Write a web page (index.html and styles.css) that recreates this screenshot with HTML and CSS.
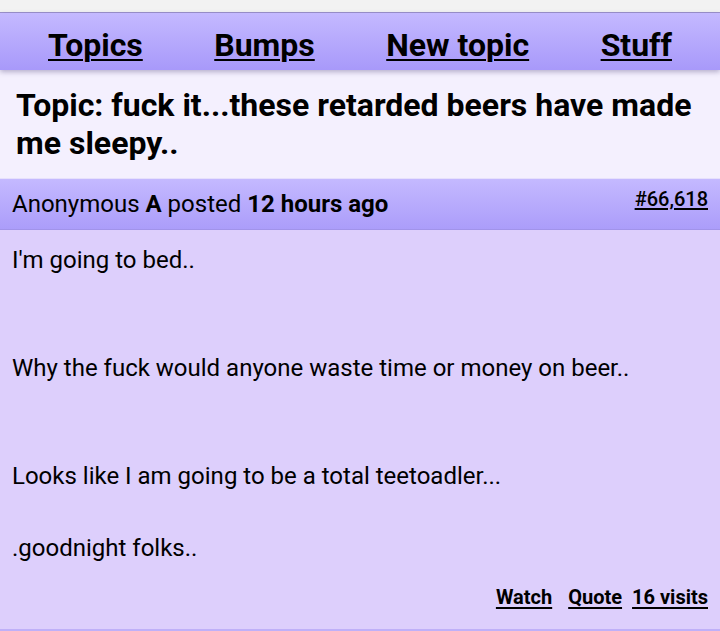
FILE: index.html
```html
<!DOCTYPE html>
<html>
<head>
<meta charset="utf-8">
<link rel="stylesheet" href="styles.css">
</head>
<body>
<div class="topstrip"></div>
<nav class="nav">
  <a href="#">Topics</a>
  <a href="#">Bumps</a>
  <a href="#">New topic</a>
  <a href="#">Stuff</a>
</nav>
<h1 class="title">Topic: fuck it...these retarded beers have made me sleepy..</h1>
<div class="post">
  <div class="post-head">
    <span class="author">Anonymous <b>A</b> posted <b>12 hours ago</b></span>
    <a class="num" href="#">#66,618</a>
  </div>
  <div class="post-body">
    <p class="text">I'm going to bed..<br><br><br>Why the fuck would anyone waste time or money on beer..<br><br><br>Looks like I am going to be a total teetoadler...<br><br>.goodnight folks..</p>
    <div class="actions">
      <a href="#" class="watch">Watch</a>
      <a href="#" class="quote">Quote</a>
      <a href="#" class="visits">16 visits</a>
    </div>
  </div>
</div>
</body>
</html>
```
FILE: styles.css
```css
html, body {
  margin: 0;
  padding: 0;
}
body {
  font-family: Roboto, "Noto Sans", sans-serif;
  color: #000;
  background: #f4f0fe;
  width: 720px;
  height: 631px;
  overflow: hidden;
}
a {
  color: #000;
}
.topstrip {
  height: 12px;
  background: #f2f2f2;
  border-bottom: 1px solid #9d93cc;
}
.nav {
  position: relative;
  z-index: 2;
  height: 57px;
  display: flex;
  justify-content: space-between;
  align-items: center;
  padding: 0 48px;
  background: linear-gradient(#c4b9ff, #a899fa);
  box-shadow: 0 2px 5px rgba(60, 50, 110, 0.35);
}
.nav a {
  font-size: 32px;
  font-weight: 700;
  line-height: 38px;
  text-decoration-thickness: 2px;
  text-underline-offset: 3px;
  padding-top: 6px;
}
.title {
  margin: 0;
  padding: 16px 16px 16px 16px;
  font-size: 32px;
  line-height: 38px;
  font-weight: 700;
  background: #f4f0fe;
}
.post-head {
  position: relative;
  height: 50px;
  display: flex;
  align-items: center;
  justify-content: space-between;
  padding: 0 12px;
  background: linear-gradient(#c4b9ff, #ab9dfa);
  border-top: 1px solid #e6e0fc;
  border-bottom: 1px solid #a193ea;
}
.author {
  font-size: 24px;
}
.author b {
  font-weight: 700;
}
.num {
  align-self: flex-start;
  margin-top: 8px;
  font-size: 20px;
  font-weight: 500;
  text-decoration-thickness: 2px;
  text-underline-offset: 2px;
}
.post-body {
  background: #ddcffc;
  padding: 12px 12px 0 12px;
  height: 387px;
  border-bottom: 2px solid #bfb0f8;
}
.text {
  margin: 0;
  font-size: 24px;
  line-height: 36px;
}
.actions {
  display: flex;
  justify-content: flex-end;
  margin-top: 19px;
  font-size: 20px;
  font-weight: 700;
}
.actions a {
  text-decoration-thickness: 2px;
  text-underline-offset: 3px;
}
.quote {
  margin-left: 16px;
}
.visits {
  margin-left: 10px;
}
```
